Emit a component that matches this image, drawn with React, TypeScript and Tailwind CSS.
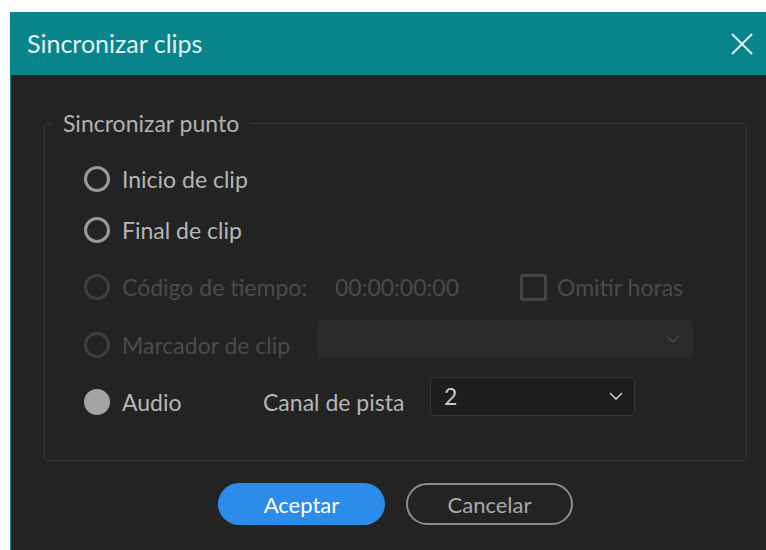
import type { ReactNode } from "react";

const FONT = { fontFamily: '"Lato", "Noto Sans", sans-serif' };

/** circular option marker: enabled ring, disabled ring or selected dot */
function Radio({ state }: { state: "on" | "off" | "disabled" }) {
  if (state === "on") {
    return <span className="h-[26px] w-[26px] shrink-0 rounded-full bg-[#a3a3a3]" />;
  }
  return (
    <span
      className={`h-[26px] w-[26px] shrink-0 rounded-full border-[3px] ${
        state === "disabled" ? "border-[#3f3f3f]" : "border-[#9a9a9a]"
      }`}
    />
  );
}

function Chevron({ color }: { color: string }) {
  return (
    <svg width="16" height="10" viewBox="0 0 16 10" fill="none">
      <polyline points="2,2 8,8 14,2" stroke={color} strokeWidth="1.6" />
    </svg>
  );
}

function Row({ children, className = "" }: { children: ReactNode; className?: string }) {
  return <div className={`flex h-[40px] items-center ${className}`}>{children}</div>;
}

export default function App() {
  return (
    <div className="h-[550px] w-[766px] overflow-hidden bg-white pl-[10px] pt-[12px]" style={FONT}>
      <div className="flex h-[538px] w-[770px] flex-col border-l border-[#07858a]">
        {/* title bar */}
        <div className="flex h-[63px] shrink-0 items-center justify-between bg-[#07858a] pl-[16px] pr-[27px]">
          <span className="text-[25px] text-[#e6f1f1]">Sincronizar clips</span>
          <svg width="22" height="22" viewBox="0 0 22 22">
            <path d="M1 1L21 21M21 1L1 21" stroke="#e3efef" strokeWidth="2" />
          </svg>
        </div>

        {/* body */}
        <div className="flex flex-1 flex-col bg-[#232323] px-[33px] pt-[35px]">
          <fieldset className="w-[703px] rounded-[4px] border border-[#363636] p-0">
            <legend className="ml-[7px] px-[11px] text-[23px] leading-[26px] text-[#b2b2b2]">
              Sincronizar punto
            </legend>
            <div className="flex flex-col pb-[38px] pl-[39px] pt-[23px] text-[23px] text-[#b6b6b6]">
              <Row>
                <Radio state="off" />
                <span className="ml-[12px]">Inicio de clip</span>
              </Row>
              <Row className="mt-[11px]">
                <Radio state="off" />
                <span className="ml-[12px]">Final de clip</span>
              </Row>
              <Row className="mt-[17px] text-[#4b4b4b]">
                <Radio state="disabled" />
                <span className="ml-[12px] w-[213px]">Código de tiempo:</span>
                <span className="w-[185px]">00:00:00:00</span>
                <span className="h-[27px] w-[27px] rounded-[3px] border-[3px] border-[#454545]" />
                <span className="ml-[10px]">Omitir horas</span>
              </Row>
              <Row className="mt-[18px] text-[#4b4b4b]">
                <Radio state="disabled" />
                <span className="ml-[12px] w-[195px]">Marcador de clip</span>
                <div className="mb-[12px] flex h-[39px] w-[376px] items-center justify-end rounded-[4px] bg-[#2a2a2a] pr-[12px]">
                  <Chevron color="#454545" />
                </div>
              </Row>
              <Row className="mt-[17px]">
                <Radio state="on" />
                <span className="ml-[12px] w-[141px]">Audio</span>
                <span className="w-[167px]">Canal de pista</span>
                <div className="mb-[12px] flex h-[39px] w-[205px] items-center justify-between rounded-[4px] border border-[#363636] bg-[#1d1d1d] pl-[13px] pr-[10px] text-[#c9c9c9]">
                  <span>2</span>
                  <Chevron color="#c4c4c4" />
                </div>
              </Row>
            </div>
          </fieldset>

          {/* actions */}
          <div className="mt-[22px] flex w-[703px] justify-center gap-[21px] text-[22px]">
            <button className="h-[42px] w-[167px] rounded-full bg-[#2c8cea] text-white">Aceptar</button>
            <button className="h-[42px] w-[167px] rounded-full border-2 border-[#8c8c8c] text-[#a9a9a9]">
              Cancelar
            </button>
          </div>
        </div>
      </div>
    </div>
  );
}
